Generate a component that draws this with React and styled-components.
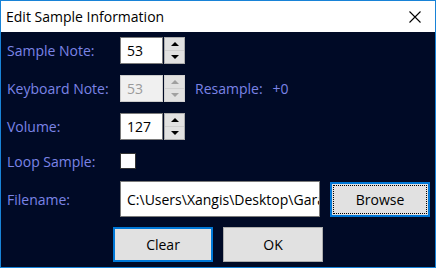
import React from 'react'
import styled, { createGlobalStyle } from 'styled-components'

const GlobalStyle = createGlobalStyle`
  html, body {
    margin: 0;
    padding: 0;
    background: #000a26;
  }
  * { box-sizing: border-box; }
`;

const Window = styled.div`
  width: 436px;
  height: 268px;
  border: 1px solid #1883d7;
  display: flex;
  flex-direction: column;
  font-family: "Open Sans", "Noto Sans", sans-serif;
  overflow: hidden;
`;

const TitleBar = styled.div`
  height: 31px;
  background: #ffffff;
  display: flex;
  align-items: center;
  justify-content: space-between;
  padding: 0 14px 0 5px;
  flex-shrink: 0;
`;

const Title = styled.span`
  font-size: 14px;
  color: #000000;
`;

const CloseIcon = styled.svg`
  width: 12px;
  height: 12px;
`;

const Body = styled.div`
  flex: 1;
  background: #000a26;
  padding: 5px 0 0 6px;
  display: flex;
  flex-direction: column;
`;

const Row = styled.div`
  display: flex;
  align-items: center;
  height: ${p => p.$h}px;
  margin-top: ${p => p.$mt || 0}px;
`;

const Label = styled.span`
  width: 113px;
  flex-shrink: 0;
  color: #7b84e6;
  font-size: 14px;
`;

const Extra = styled.span`
  color: #7b84e6;
  font-size: 14px;
  margin-left: ${p => p.$ml}px;
`;

const NumBox = styled.div`
  width: 43px;
  height: 27px;
  border: 1px solid ${p => (p.$disabled ? '#cccccc' : '#7a7a7a')};
  background: ${p => (p.$disabled ? '#f0f0f0' : '#ffffff')};
  color: ${p => (p.$disabled ? '#9a9a9a' : '#000000')};
  font-size: 14px;
  display: flex;
  align-items: center;
  padding-left: 6px;
`;

const Spinner = styled.div`
  width: 21px;
  height: 27px;
  margin-left: 1px;
  border: 1px solid ${p => (p.$disabled ? '#d0d0d0' : '#adadad')};
  background: #e1e1e1;
  display: flex;
  flex-direction: column;
`;

const SpinHalf = styled.div`
  flex: 1;
  display: flex;
  align-items: center;
  justify-content: center;
  & + & {
    border-top: 1px solid ${p => (p.$disabled ? '#d0d0d0' : '#adadad')};
  }
`;

const Arrow = styled.div`
  width: 0;
  height: 0;
  border-left: 4px solid transparent;
  border-right: 4px solid transparent;
  ${p => (p.$down ? 'border-top' : 'border-bottom')}: 4px solid ${p => (p.$disabled ? '#a0a0a0' : '#000000')};
`;

const Checkbox = styled.div`
  width: 16px;
  height: 16px;
  background: #ffffff;
  border: 1px solid #333333;
`;

const TextBox = styled.div`
  width: 200px;
  height: 36px;
  border: 1px solid #7a7a7a;
  background: #ffffff;
  color: #000000;
  font-size: 14px;
  display: flex;
  align-items: center;
  padding-left: 6px;
  white-space: nowrap;
  overflow: hidden;
`;

const Button = styled.button`
  width: 100px;
  height: ${p => p.$h || 35}px;
  background: #e1e1e1;
  border: ${p => (p.$focus ? '2px solid #0078d7' : '1px solid #adadad')};
  font-family: "Open Sans", "Noto Sans", sans-serif;
  font-size: 14px;
  color: #000000;
  padding: 0;
  margin-left: ${p => p.$ml || 0}px;
  position: relative;
  display: flex;
  align-items: center;
  justify-content: center;
`;

const FocusRect = styled.span`
  position: absolute;
  inset: 1px;
  border: 1px dotted #000000;
  pointer-events: none;
`;

function NumericUpDown({ value, disabled }) {
  return (
    <>
      <NumBox $disabled={disabled}>{value}</NumBox>
      <Spinner $disabled={disabled}>
        <SpinHalf $disabled={disabled}><Arrow $disabled={disabled} /></SpinHalf>
        <SpinHalf $disabled={disabled}><Arrow $down $disabled={disabled} /></SpinHalf>
      </Spinner>
    </>
  )
}

export default function App() {
  return (
    <>
      <GlobalStyle />
      <Window>
        <TitleBar>
          <Title>Edit Sample Information</Title>
          <CloseIcon viewBox="0 0 12 12">
            <path d="M0.5 0.5 L11.5 11.5 M11.5 0.5 L0.5 11.5" stroke="#000" strokeWidth="1.1" fill="none" />
          </CloseIcon>
        </TitleBar>
        <Body>
          <Row $h={27}>
            <Label>Sample Note:</Label>
            <NumericUpDown value="53" />
          </Row>
          <Row $h={27} $mt={11}>
            <Label>Keyboard Note:</Label>
            <NumericUpDown value="53" disabled />
            <Extra $ml={10}>Resample:</Extra>
            <Extra $ml={10}>+0</Extra>
          </Row>
          <Row $h={27} $mt={11}>
            <Label>Volume:</Label>
            <NumericUpDown value="127" />
          </Row>
          <Row $h={20} $mt={11}>
            <Label>Loop Sample:</Label>
            <Checkbox />
          </Row>
          <Row $h={36} $mt={10}>
            <Label>Filename:</Label>
            <TextBox>C:\Users\Xangis\Desktop\Garage</TextBox>
            <Button $focus $ml={10}>
              <FocusRect />
              Browse
            </Button>
          </Row>
          <Row $h={35} $mt={10}>
            <Button $focus $ml={106}>Clear</Button>
            <Button $ml={10}>OK</Button>
          </Row>
        </Body>
      </Window>
    </>
  )
}
